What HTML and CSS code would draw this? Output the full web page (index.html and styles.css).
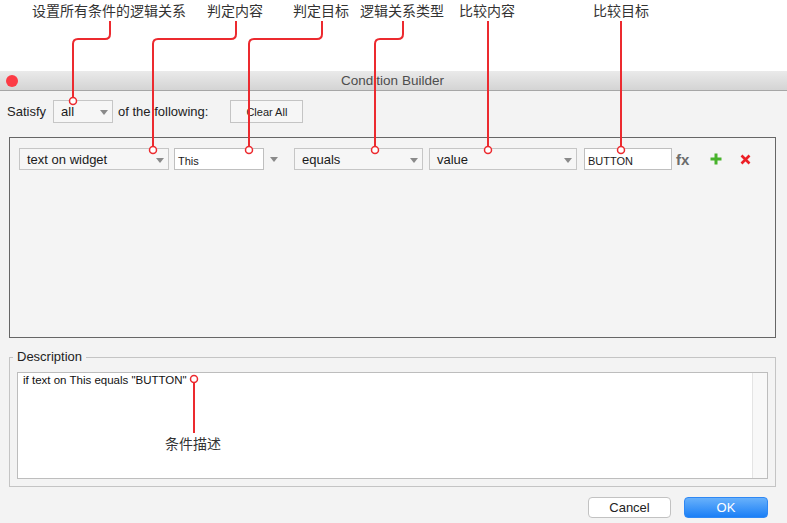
FILE: index.html
```html
<!DOCTYPE html>
<html lang="en">
<head>
    <meta charset="UTF-8">
    <title>Condition Builder</title>
    <link rel="stylesheet" href="styles.css">
</head>
<body>
<div class="page">
    <div class="top-space"></div>
    <div class="window">
        <div class="titlebar">
            <span class="close-dot"></span>
            <span class="title">Condition Builder</span>
            <span></span>
        </div>
        <div class="content">
            <div class="satisfy-row">
                <span class="lbl">Satisfy</span>
                <div class="select select-all">all<i class="caret"></i></div>
                <span class="lbl lbl-following">of the following:</span>
                <button class="btn-clear">Clear All</button>
            </div>

            <div class="cond-box">
                <div class="cond-row">
                    <div class="select w-widget">text on widget<i class="caret"></i></div>
                    <div class="input w-this">This</div>
                    <i class="caret caret-free"></i>
                    <div class="select w-equals">equals<i class="caret"></i></div>
                    <div class="select w-value">value<i class="caret"></i></div>
                    <div class="input w-button">BUTTON</div>
                    <span class="fx">fx</span>
                    <svg class="icon-add" width="12" height="12" viewBox="0 0 12 12">
                        <path d="M6 0.5V11.5M0.5 6H11.5" stroke="#47b22b" stroke-width="3" fill="none"/>
                    </svg>
                    <svg class="icon-del" width="11" height="11" viewBox="0 0 11 11">
                        <path d="M1.5 1.5L9.5 9.5M9.5 1.5L1.5 9.5" stroke="#ec1f26" stroke-width="2.6" fill="none"/>
                    </svg>
                </div>
            </div>

            <fieldset class="desc">
                <legend>Description</legend>
                <div class="desc-area">
                    <div class="desc-text">if text on This equals "BUTTON"</div>
                    <div class="desc-scroll"></div>
                </div>
            </fieldset>

            <div class="actions">
                <button class="btn btn-cancel">Cancel</button>
                <button class="btn btn-ok">OK</button>
            </div>
        </div>
    </div>

    <!-- callout layer -->
    <svg class="notes" width="787" height="523" viewBox="0 0 787 523">
        <g class="note-text">
            <text x="109" y="16">设置所有条件的逻辑关系</text>
            <text x="235" y="16">判定内容</text>
            <text x="321" y="16">判定目标</text>
            <text x="402" y="16">逻辑关系类型</text>
            <text x="487" y="16">比较内容</text>
            <text x="621" y="16">比较目标</text>
            <text x="193" y="449">条件描述</text>
        </g>
        <g class="note-lines">
            <path d="M110 21V34Q110 39 105 39H78Q73 39 73 44V97.5"/>
            <path d="M236 21V34Q236 39 231 39H158Q153 39 153 44V146.5"/>
            <path d="M322 21V34Q322 39 317 39H254Q249 39 249 44V146.5"/>
            <path d="M403 21V34Q403 39 398 39H380Q375 39 375 44V146.5"/>
            <path d="M488 21V146.5"/>
            <path d="M621 21V146.5"/>
            <path d="M194 382.5V433"/>
        </g>
        <g class="note-dots">
            <circle cx="73" cy="101" r="3.5"/>
            <circle cx="153" cy="150" r="3.5"/>
            <circle cx="249" cy="150" r="3.5"/>
            <circle cx="375" cy="150" r="3.5"/>
            <circle cx="488" cy="150" r="3.5"/>
            <circle cx="621" cy="150" r="3.5"/>
            <circle cx="194" cy="379" r="3.5"/>
        </g>
    </svg>
</div>
</body>
</html>
```

FILE: styles.css
```css
* {
    box-sizing: border-box;
}

body {
    margin: 0;
    background: #fff;
    font-family: "Liberation Sans", Arial, sans-serif;
    color: #222;
}

.page {
    position: relative;
    width: 787px;
    height: 523px;
    overflow: hidden;
}

.top-space {
    height: 71px;
    background: #fff;
}

.window {
    height: 452px;
    background: #f3f3f3;
}

.titlebar {
    display: grid;
    grid-template-columns: 1fr auto 1fr;
    align-items: center;
    height: 20px;
    background: linear-gradient(#eaeaea, #d4d4d4);
    border-bottom: 1px solid #a6a6a6;
}

.close-dot {
    width: 12px;
    height: 12px;
    margin-left: 6px;
    border-radius: 50%;
    background: #fc3b45;
}

.title {
    font-size: 13.5px;
    color: #4d4d4d;
    margin-right: 2px;
}

.content {
    padding: 9px 11px 0 7px;
}

/* satisfy row */
.satisfy-row {
    display: flex;
    align-items: center;
    height: 23px;
}

.lbl {
    font-size: 13px;
    color: #222;
}

.lbl-following {
    margin-left: 5px;
}

.select,
.input {
    position: relative;
    display: flex;
    align-items: center;
    height: 22px;
    font-size: 13px;
    color: #1a1a1a;
    border: 1px solid #c6c6c6;
}

.select {
    padding-left: 7px;
    background: #f6f6f6;
}

.input {
    padding: 3px 0 0 3px;
    font-size: 11px;
    background: #fff;
    border-color: #bfbfbf;
}

.select-all {
    width: 60px;
    height: 23px;
    margin-left: 7px;
}

.caret {
    position: absolute;
    right: 4px;
    top: 9px;
    width: 0;
    height: 0;
    border-left: 4px solid transparent;
    border-right: 4px solid transparent;
    border-top: 5px solid #8a8a8a;
}

.btn-clear {
    width: 73px;
    height: 23px;
    margin-left: 22px;
    padding: 0;
    font-family: inherit;
    font-size: 11px;
    color: #222;
    background: #f6f6f6;
    border: 1px solid #c4c4c4;
}

/* condition rows */
.cond-box {
    height: 201px;
    margin: 14px 0 0 2px;
    padding: 10px 9px;
    background: #f4f4f4;
    border: 1px solid #666;
}

.cond-row {
    display: flex;
    align-items: center;
    height: 22px;
}

.w-widget {
    width: 150px;
}

.w-this {
    width: 90px;
    margin-left: 5px;
}

.caret-free {
    position: static;
    margin: 0 16px 0 6px;
    border-left-width: 4.5px;
    border-right-width: 4.5px;
}

.w-equals {
    width: 129px;
}

.w-value {
    width: 148px;
    margin-left: 6px;
}

.w-button {
    width: 88px;
    margin-left: 7px;
}

.fx {
    margin-left: 4px;
    font-size: 15px;
    font-weight: bold;
    color: #6b6b6b;
}

.icon-add {
    margin-left: 21px;
}

.icon-del {
    margin-left: 18px;
}

/* description */
.desc {
    margin: 11px 0 0 2px;
    padding: 7px 7px 7px 7px;
    border: 1px solid #c4c4c4;
}

.desc legend {
    padding: 0 4px;
    margin-left: -4px;
    font-size: 13px;
    line-height: 16px;
    color: #222;
}

.desc-area {
    display: flex;
    height: 107px;
    background: #fff;
    border: 1px solid #bdbdbd;
}

.desc-text {
    flex: 1;
    padding: 1px 5px;
    font-size: 11.5px;
    color: #111;
}

.desc-scroll {
    width: 15px;
    background: #f8f8f8;
    border-left: 1px solid #e4e4e4;
}

/* footer buttons */
.actions {
    display: flex;
    justify-content: flex-end;
    gap: 13px;
    margin: 10px 8px 0 0;
}

.btn {
    height: 21px;
    padding: 0;
    font-family: inherit;
    font-size: 13px;
    border-radius: 4px;
}

.btn-cancel {
    width: 83px;
    color: #222;
    background: #fff;
    border: 1px solid #c2c2c2;
}

.btn-ok {
    width: 84px;
    color: #fff;
    background: linear-gradient(#68b1fb, #1b7ff6);
    border: 1px solid #2f88f4;
}

/* annotations */
.notes {
    position: absolute;
    top: 0;
    left: 0;
    pointer-events: none;
}

.note-text text {
    font-family: "Noto Sans CJK SC", sans-serif;
    font-size: 14px;
    fill: #333;
    text-anchor: middle;
}

.note-lines path {
    fill: none;
    stroke: #ec2a2f;
    stroke-width: 2;
}

.note-dots circle {
    fill: #fff;
    stroke: #ec2a2f;
    stroke-width: 1.5;
}
```
